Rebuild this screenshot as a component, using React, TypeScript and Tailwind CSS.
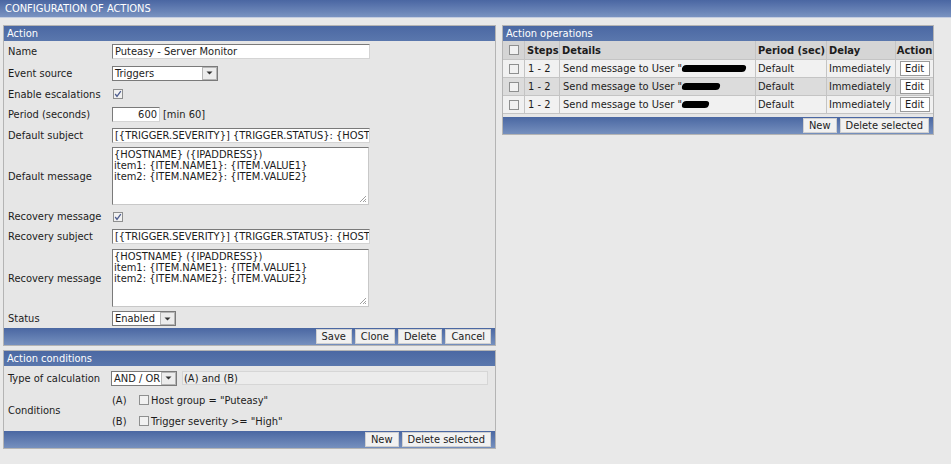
import React from "react";

const Check = ({ checked = false }: { checked?: boolean }) => (
  <span className="inline-flex w-[10px] h-[10px] border border-[#8e8f8f] bg-[#f1f1f1] items-center justify-center shrink-0">
    {checked && (
      <svg width="8" height="8" viewBox="0 0 8 8">
        <path d="M1.2 4 L3 6.4 L6.8 1.2" stroke="#4d5d8f" strokeWidth="1.3" fill="none" />
      </svg>
    )}
  </span>
);

const Arrow = () => (
  <span className="flex w-[15px] h-[13px] border border-[#b5b5b5] bg-[#ececec] items-center justify-center">
    <svg width="7" height="4" viewBox="0 0 7 4">
      <path d="M0.5 0.5 L6.5 0.5 L3.5 3.5 Z" fill="#333" />
    </svg>
  </span>
);

const Btn = ({ children }: { children: React.ReactNode }) => (
  <span className="flex h-[15px] items-center justify-center bg-[#f1f1f1] border border-[#d0d0d0] px-[5px] text-[#222]">
    {children}
  </span>
);

const Row = ({ label, h, children }: { label: string; h: string; children: React.ReactNode }) => (
  <div className={"flex items-center " + h}>
    <div className="w-[108px] pl-[4px] shrink-0">{label}</div>
    <div className="flex items-center">{children}</div>
  </div>
);

const TextInput = ({ value, className }: { value: string; className: string }) => (
  <div className={"h-[15px] bg-white border border-[#7a7a7a] border-r-[#d4d4d4] border-b-[#d4d4d4] flex items-center px-[2px] overflow-hidden whitespace-nowrap " + className}>
    {value}
  </div>
);

const TextArea = () => (
  <div className="relative w-[257px] h-[58px] bg-white border border-[#7a7a7a] border-r-[#c8c8c8] border-b-[#c8c8c8] px-[1px] pt-[1px] leading-[11px]">
    <div>{"{HOSTNAME} ({IPADDRESS})"}</div>
    <div>{"item1: {ITEM.NAME1}: {ITEM.VALUE1}"}</div>
    <div>{"item2: {ITEM.NAME2}: {ITEM.VALUE2}"}</div>
    <svg className="absolute right-[1px] bottom-[1px]" width="8" height="8" viewBox="0 0 8 8">
      <path d="M7 1 L1 7 M7 4 L4 7 M7 6 L6 7" stroke="#a0a0a0" strokeWidth="1" />
    </svg>
  </div>
);

const PanelHead = ({ children }: { children: React.ReactNode }) => (
  <div className="h-[15px] bg-linear-to-b from-[#4b68a3] to-[#5a77ad] text-white pl-[3px] flex items-center">{children}</div>
);

const Footer = ({ children }: { children: React.ReactNode }) => (
  <div className="h-[17px] bg-linear-to-b from-[#4a67a2] to-[#7690be] flex items-center justify-end gap-[3px] pr-[4px]">{children}</div>
);

const Redact = ({ w }: { w: string }) => (
  <span className={"inline-block h-[7px] bg-black rounded-full align-middle -skew-x-12 " + w} />
);

export default function App() {
  const ops = [
    { w: "w-[64px]", bg: "bg-[#f1f1f1]" },
    { w: "w-[38px]", bg: "bg-[#dcdcdc]" },
    { w: "w-[27px]", bg: "bg-[#f1f1f1]" },
  ];
  return (
    <div className="w-[951px] h-[464px] bg-[#e9e9e9] text-[11px] text-[#1c1c1c] overflow-hidden font-['Tahoma','DejaVu_Sans_Condensed','DejaVu_Sans',sans-serif] leading-none">
      <div className="h-[18px] bg-linear-to-b from-[#4a66a2] to-[#7a93c1] text-white pl-[5px] flex items-center border-b border-[#c4cde0]">
        CONFIGURATION OF ACTIONS
      </div>
      <div className="flex items-start gap-[6px] pl-[3px] pt-[7px]">
        <div className="w-[493px] flex flex-col gap-[4px]">
          <div className="border border-[#b4b4b4] bg-[#e6e6e6]">
            <PanelHead>Action</PanelHead>
            <div className="flex flex-col">
              <Row label="Name" h="h-[21px]">
                <TextInput value="Puteasy - Server Monitor" className="w-[258px]" />
              </Row>
              <Row label="Event source" h="h-[22px]">
                <div className="flex w-[106px] h-[15px] bg-white border border-[#7a7a7a] items-center justify-between pl-[2px]">
                  <span>Triggers</span>
                  <Arrow />
                </div>
              </Row>
              <Row label="Enable escalations" h="h-[20px]">
                <span className="pl-[1px] flex"><Check checked /></span>
              </Row>
              <Row label="Period (seconds)" h="h-[21px]">
                <TextInput value="600" className="w-[48px] justify-end" />
                <span className="ml-[3px]">[min 60]</span>
              </Row>
              <Row label="Default subject" h="h-[20px]">
                <TextInput value="[{TRIGGER.SEVERITY}] {TRIGGER.STATUS}: {HOSTNAME}: {TRIGGER.NAME}" className="w-[258px]" />
              </Row>
              <Row label="Default message" h="h-[62px]">
                <TextArea />
              </Row>
              <Row label="Recovery message" h="h-[19px]">
                <span className="pl-[1px] flex"><Check checked /></span>
              </Row>
              <Row label="Recovery subject" h="h-[21px]">
                <TextInput value="[{TRIGGER.SEVERITY}] {TRIGGER.STATUS}: {HOSTNAME}: {TRIGGER.NAME}" className="w-[258px]" />
              </Row>
              <Row label="Recovery message" h="h-[62px]">
                <TextArea />
              </Row>
              <Row label="Status" h="h-[19px]">
                <div className="flex w-[64px] h-[15px] bg-white border border-[#7a7a7a] items-center justify-between pl-[2px]">
                  <span>Enabled</span>
                  <Arrow />
                </div>
              </Row>
            </div>
            <Footer>
              <Btn>Save</Btn>
              <Btn>Clone</Btn>
              <Btn>Delete</Btn>
              <Btn>Cancel</Btn>
            </Footer>
          </div>
          <div className="border border-[#b4b4b4] bg-[#e6e6e6]">
            <PanelHead>Action conditions</PanelHead>
            <div className="flex flex-col">
              <div className="flex items-center h-[24px]">
                <div className="w-[107px] pl-[4px] shrink-0">Type of calculation</div>
                <div className="flex w-[66px] h-[15px] bg-white border border-[#7a7a7a] items-center justify-between pl-[2px]">
                  <span>AND / OR</span>
                  <Arrow />
                </div>
                <div className="ml-[5px] w-[306px] h-[14px] bg-[#ececec] border border-[#d6d6d6] flex items-center pl-[1px]">(A) and (B)</div>
              </div>
              <div className="flex items-center h-[41px]">
                <div className="w-[108px] pl-[4px] shrink-0">Conditions</div>
                <div className="flex flex-col gap-[10px]">
                  <div className="flex items-center">
                    <span className="w-[27px]">(A)</span>
                    <Check />
                    <span className="ml-[2px]">Host group = "Puteasy"</span>
                  </div>
                  <div className="flex items-center">
                    <span className="w-[27px]">(B)</span>
                    <Check />
                    <span className="ml-[2px]">Trigger severity &gt;= "High"</span>
                  </div>
                </div>
              </div>
            </div>
            <Footer>
              <Btn>New</Btn>
              <Btn>Delete selected</Btn>
            </Footer>
          </div>
        </div>
        <div className="w-[432px] border border-[#b4b4b4] bg-[#e6e6e6]">
          <PanelHead>Action operations</PanelHead>
          <div className="flex flex-col">
            <div className="flex h-[19px] bg-[#d5d5d5] font-bold border-b border-[#c4c4c4]">
              <div className="w-[22px] flex items-center justify-center border-r border-[#c4c4c4]"><Check /></div>
              <div className="w-[35px] flex items-center pl-[2px] border-r border-[#c4c4c4]">Steps</div>
              <div className="w-[196px] flex items-center pl-[2px] border-r border-[#c4c4c4]">Details</div>
              <div className="w-[71px] flex items-center pl-[2px] border-r border-[#c4c4c4]">Period (sec)</div>
              <div className="w-[69px] flex items-center pl-[2px] border-r border-[#c4c4c4]">Delay</div>
              <div className="flex-1 flex items-center justify-center">Action</div>
            </div>
            {ops.map((o, i) => (
              <div key={i} className={"flex h-[18px] border-b border-[#c4c4c4] " + o.bg}>
                <div className="w-[22px] flex items-center justify-center border-r border-[#c4c4c4]"><Check /></div>
                <div className="w-[35px] flex items-center pl-[3px] border-r border-[#c4c4c4]">1 - 2</div>
                <div className="w-[196px] flex items-center pl-[3px] border-r border-[#c4c4c4] whitespace-nowrap overflow-hidden">
                  Send message to User "<Redact w={o.w} />
                </div>
                <div className="w-[71px] flex items-center pl-[2px] border-r border-[#c4c4c4]">Default</div>
                <div className="w-[69px] flex items-center pl-[2px] border-r border-[#c4c4c4]">Immediately</div>
                <div className="flex-1 flex items-center justify-center">
                  <span className="flex h-[15px] w-[30px] items-center justify-center bg-white border border-[#9a9a9a]">Edit</span>
                </div>
              </div>
            ))}
          </div>
          <div className="h-[3px]" />
          <Footer>
            <Btn>New</Btn>
            <Btn>Delete selected</Btn>
          </Footer>
        </div>
      </div>
    </div>
  );
}
